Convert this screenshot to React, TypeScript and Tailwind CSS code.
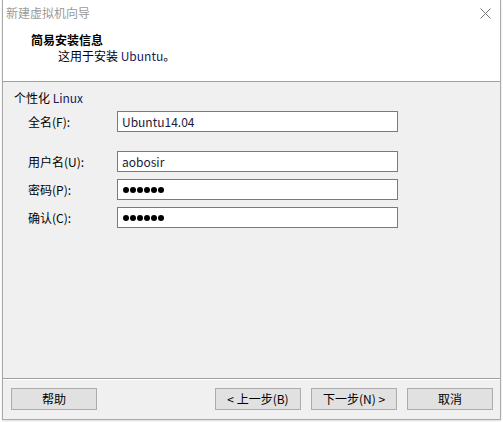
const FONT = "font-['Noto_Sans_CJK_SC','Liberation_Sans',sans-serif]";

function Field({ label, value, secret = false }: { label: string; value: string; secret?: boolean }) {
  return (
    <div className="flex items-center">
      <span className="w-[89px] text-[12px] leading-[16px] text-black">{label}</span>
      <div className="flex h-[21px] w-[281px] items-center border border-[#7a7a7a] bg-white px-[4px]">
        {secret ? (
          <span className="ml-[1px] flex gap-[1px]" aria-label="password">
            {value.split('').map((_, i) => (
              <span key={i} className="h-[6px] w-[6px] rounded-full bg-black" />
            ))}
          </span>
        ) : (
          <span className="text-[12px] leading-none text-[#1a1a3a]">{value}</span>
        )}
      </div>
    </div>
  );
}

function Button({ children }: { children: React.ReactNode }) {
  return (
    <button
      type="button"
      className="flex h-[22px] w-[86px] items-center justify-center border border-[#adadad] bg-[#e1e1e1] text-[12px] leading-none text-black"
    >
      {children}
    </button>
  );
}

export default function App() {
  return (
    <div className={`h-[422px] w-[503px] bg-white ${FONT}`}>
      <div className="ml-[2px] flex h-[420px] w-[499px] flex-col border-x border-b border-[#a9a9a9] shadow-[0_1px_2px_rgba(0,0,0,0.15)]">
        {/* title bar */}
        <div className="flex h-[30px] items-start justify-between bg-white pl-[3px] pr-[9px] pt-[5px]">
          <span className="text-[12px] leading-[16px] text-[#9a9a9a]">新建虚拟机向导</span>
          <svg width="11" height="11" viewBox="0 0 11 11" className="mt-[3px]">
            <path d="M0.5 0.5 L10.5 10.5 M10.5 0.5 L0.5 10.5" stroke="#7a7a7a" strokeWidth="1" fill="none" />
          </svg>
        </div>

        {/* header */}
        <div className="flex h-[52px] flex-col border-b border-[#a0a0a0] bg-white pt-[2px]">
          <span className="pl-[28px] text-[12px] font-bold leading-[16px] text-black">简易安装信息</span>
          <span className="pl-[55px] text-[12px] leading-[16px] text-black">
            这用于安装 <span className="text-[#1a1a5a]">Ubuntu</span>。
          </span>
        </div>

        {/* body */}
        <div className="flex flex-1 flex-col bg-[#f0f0f0] pt-[8px]">
          <span className="pl-[11px] text-[12px] leading-[16px] text-black">
            个性化 <span className="text-[#1a1a5a]">Linux</span>
          </span>
          <div className="flex flex-col pl-[25px] pt-[5px]">
            <Field label="全名(F):" value="Ubuntu14.04" />
            <div className="mt-[19px] flex flex-col gap-[7px]">
              <Field label="用户名(U):" value="aobosir" />
              <Field label="密码(P):" value="●●●●●●" secret />
              <Field label="确认(C):" value="●●●●●●" secret />
            </div>
          </div>
        </div>

        {/* footer */}
        <div className="flex h-[41px] items-start justify-between border-t border-[#a0a0a0] bg-[#f0f0f0] pl-[8px] pr-[7px] pt-[9px] shadow-[inset_0_1px_0_#ffffff]">
          <Button>帮助</Button>
          <div className="flex gap-[10px]">
            <Button>&lt; 上一步(B)</Button>
            <Button>下一步(N) &gt;</Button>
            <Button>取消</Button>
          </div>
        </div>
      </div>
    </div>
  );
}
